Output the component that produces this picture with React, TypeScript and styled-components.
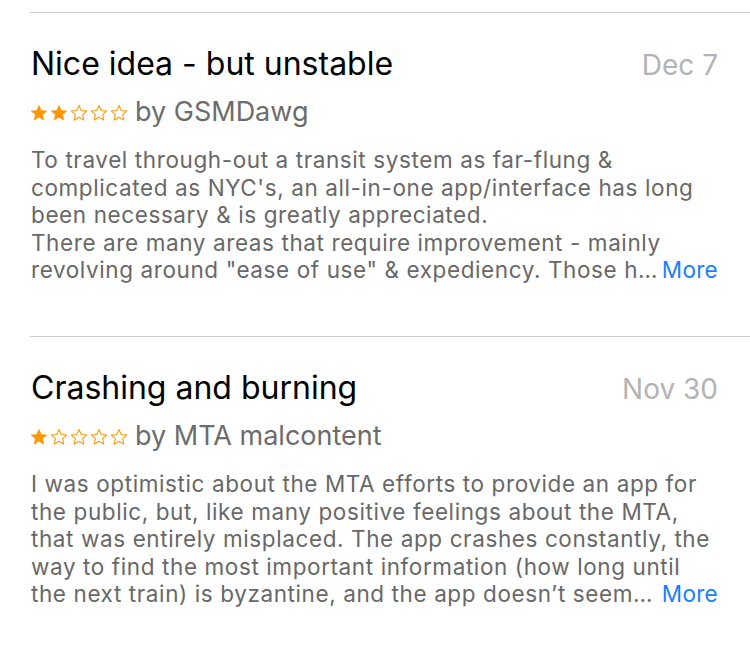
import React from "react";
import styled, { createGlobalStyle } from "styled-components";

const Global = createGlobalStyle`
  html, body { margin: 0; padding: 0; background: #ffffff; }
  body { font-family: Inter, "Liberation Sans", Arial, sans-serif; -webkit-font-smoothing: antialiased; }
`;

const List = styled.div`
  padding-top: 12px;
  width: 750px;
  overflow: hidden;
`;

const Card = styled.article`
  margin-left: 30px;
  border-top: 1px solid #cfcfd2;
  padding: 31px 32px 0 1px;
  height: 324px;
  box-sizing: border-box;
  display: flex;
  flex-direction: column;
`;

const Header = styled.div`
  display: flex;
  justify-content: space-between;
  align-items: baseline;
`;

const Title = styled.h2`
  margin: 0;
  font-size: 32px;
  line-height: 40px;
  font-weight: 400;
  color: #000;
`;

const DateText = styled.span`
  font-size: 28px;
  color: #b3b3b3;
`;

const Byline = styled.div`
  display: flex;
  align-items: center;
  gap: 8px;
  margin-top: 10px;
  font-size: 27px;
  line-height: 36px;
  color: #6c6c6c;
`;

const Stars = styled.div`
  display: flex;
  gap: 4px;
  padding-top: 2px;
`;

const Body = styled.p`
  margin: 16px 0 0;
  font-size: 22.5px;
  letter-spacing: 0.6px;
  line-height: 27.5px;
  color: #686868;
`;

const Line = styled.span`
  display: block;
  white-space: nowrap;
`;

const LastLine = styled(Line)`
  display: flex;
  justify-content: space-between;
`;

const More = styled.span`
  color: #1a7ffb;
  margin-left: 2px;
  letter-spacing: 0.3px;
`;

const Star = ({ filled }: { filled: boolean }) => (
  <svg width="16" height="16" viewBox="1 1.2 22 22">
    <path
      d="M12 1.8l3.1 7 7.6.7-5.8 5 1.8 7.5L12 18l-6.7 4 1.8-7.5-5.8-5 7.6-.7z"
      fill={filled ? "#ff9500" : "none"}
      stroke="#ff9500"
      strokeWidth={filled ? 0.8 : 1.4}
      strokeLinejoin="round"
    />
  </svg>
);

type Review = {
  title: string;
  date: string;
  rating: number;
  author: string;
  lines: string[];
  last: string;
};

const reviews: Review[] = [
  {
    title: "Nice idea - but unstable",
    date: "Dec 7",
    rating: 2,
    author: "GSMDawg",
    lines: [
      "To travel through-out a transit system as far-flung &",
      "complicated as NYC's, an all-in-one app/interface has long",
      "been necessary & is greatly appreciated.",
      "There are many areas that require improvement - mainly",
    ],
    last: "revolving around \"ease of use\" & expediency. Those h…",
  },
  {
    title: "Crashing and burning",
    date: "Nov 30",
    rating: 1,
    author: "MTA malcontent",
    lines: [
      "I was optimistic about the MTA efforts to provide an app for",
      "the public, but, like many positive feelings about the MTA,",
      "that was entirely misplaced. The app crashes constantly, the",
      "way to find the most important information (how long until",
    ],
    last: "the next train) is byzantine, and the app doesn’t seem…",
  },
];

export default function App() {
  return (
    <>
      <Global />
      <List>
        {reviews.map((r) => (
          <Card key={r.title}>
            <Header>
              <Title>{r.title}</Title>
              <DateText>{r.date}</DateText>
            </Header>
            <Byline>
              <Stars>
                {[0, 1, 2, 3, 4].map((i) => (
                  <Star key={i} filled={i < r.rating} />
                ))}
              </Stars>
              <span>by {r.author}</span>
            </Byline>
            <Body>
              {r.lines.map((l) => (
                <Line key={l}>{l}</Line>
              ))}
              <LastLine>
                <span>{r.last}</span>
                <More>More</More>
              </LastLine>
            </Body>
          </Card>
        ))}
      </List>
    </>
  );
}
